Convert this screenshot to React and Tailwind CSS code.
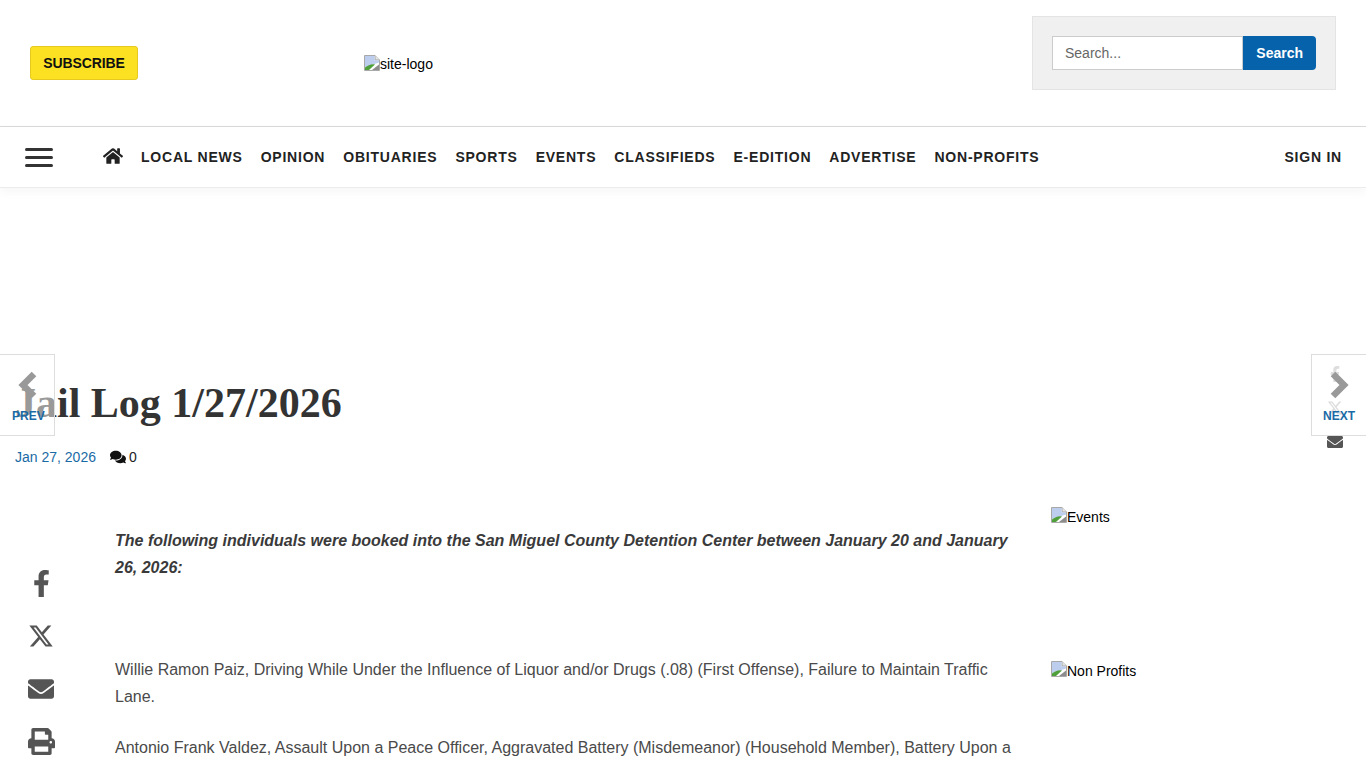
import { FaHome, FaComments, FaFacebookF, FaEnvelope, FaPrint } from 'react-icons/fa';
import { FaXTwitter } from 'react-icons/fa6';

const navLinks = ['LOCAL NEWS', 'OPINION', 'OBITUARIES', 'SPORTS', 'EVENTS', 'CLASSIFIEDS', 'E-EDITION', 'ADVERTISE', 'NON-PROFITS'];

function BrokenImage({ alt, textClass = 'pt-[2px]' }) {
  return (
    <span className="inline-flex items-start text-[14px] leading-[16px] text-black">
      <svg width="16" height="16" viewBox="0 0 16 16" className="shrink-0">
        <path d="M0.5 0.5H11L15.5 5V15.5H0.5Z" fill="#fff" stroke="#a8a8a8" />
        <path d="M11 0.5V5H15.5" fill="#e4e4e4" stroke="#a8a8a8" />
        <path d="M1 1H10.5V5.5H15V7.5L1 12Z" fill="#bccdee" />
        <path d="M1 15V12.5C4 10 8 8.5 11 9.5L5 15Z" fill="#4f9f3a" />
        <path d="M8 15L15 9.5V15Z" fill="#8c8c8c" />
      </svg>
      <span className={textClass}>{alt}</span>
    </span>
  );
}

function Chevron({ points }) {
  return (
    <svg width="22" height="30" viewBox="0 0 22 30" className="text-[#999]">
      <polyline points={points} fill="none" stroke="currentColor" strokeWidth="6.5" />
    </svg>
  );
}

function Header() {
  return (
    <header className="flex h-[127px] items-start border-b border-[#d9d9d9]">
      <a className="ml-[30px] mt-[46px] flex h-[34px] w-[108px] items-center justify-center rounded-[3px] border border-[#e6c91f] bg-[#fbe122] text-[14px] font-bold tracking-[-0.1px] text-[#111]">
        SUBSCRIBE
      </a>
      <div className="ml-[226px] mt-[54px]">
        <BrokenImage alt="site-logo" textClass="pt-[1px]" />
      </div>
      <div className="ml-auto mr-[30px] mt-4 flex h-[74px] w-[304px] items-center border border-[#e4e4e4] bg-[#f0f0f0] px-[19px]">
        <div className="flex h-[34px] w-[192px] items-center border border-[#ccc] bg-white pl-3 text-[14px] text-[#666]">
          Search...
        </div>
        <button className="flex h-[34px] w-[73px] items-center justify-center rounded-r-[4px] bg-[#0562ab] text-[14px] font-bold text-white">
          Search
        </button>
      </div>
    </header>
  );
}

function Nav() {
  return (
    <nav className="flex h-[61px] items-center border-b border-[#ececec] shadow-[0_4px_10px_rgba(0,0,0,0.04)]">
      <div className="ml-[25px] flex w-[28px] flex-col gap-[5px]">
        <span className="h-[3px] rounded-sm bg-[#333]" />
        <span className="h-[3px] rounded-sm bg-[#333]" />
        <span className="h-[3px] rounded-sm bg-[#333]" />
      </div>
      <FaHome className="ml-[50px] mb-[3px] text-[#222]" size={20} />
      <ul className="ml-[18px] flex gap-[18px] text-[14px] font-bold tracking-[0.78px] text-[#222]">
        {navLinks.map(link => (
          <li key={link}>{link}</li>
        ))}
      </ul>
      <a className="ml-auto mr-6 text-[14px] font-bold tracking-[0.78px] text-[#222]">SIGN IN</a>
    </nav>
  );
}

function ArticleBody() {
  return (
    <div className="mt-[40px] flex">
      <div className="ml-[115px] w-[900px] text-[16px] leading-[27px] text-[#4a4a4a]">
        <p className="mt-[20px] font-bold italic text-[#3a3a3a]">
          The following individuals were booked into the San Miguel County Detention Center between January 20 and January 26, 2026:
        </p>
        <p className="mt-[75px]">
          Willie Ramon Paiz, Driving While Under the Influence of Liquor and/or Drugs (.08) (First Offense), Failure to Maintain Traffic Lane.
        </p>
        <p className="mt-[24px]">
          Antonio Frank Valdez, Assault Upon a Peace Officer, Aggravated Battery (Misdemeanor) (Household Member), Battery Upon a Peace Officer.
        </p>
      </div>
      <aside className="ml-[36px] flex flex-col items-start gap-[136px]">
        <BrokenImage alt="Events" />
        <BrokenImage alt="Non Profits" />
      </aside>
    </div>
  );
}

export default function App() {
  return (
    <div className="relative h-[768px] w-[1366px] overflow-hidden bg-white font-['Liberation_Sans',Arial,sans-serif]">
      <Header />
      <Nav />
      <main className="pt-[175px]">
        <h1 className="ml-[15px] font-['Liberation_Serif','Times_New_Roman',serif] text-[42px] font-bold leading-[80px] text-[#333]">
          Jail Log 1/27/2026
        </h1>
        <div className="ml-[15px] mt-[4px] flex items-center text-[14px] leading-[20px]">
          <span className="text-[#1a6aa5]">Jan 27, 2026</span>
          <FaComments className="ml-[14px] text-[#111]" size={16} />
          <span className="ml-[3px] text-[#222]">0</span>
        </div>
        <ArticleBody />
      </main>

      {/* fixed share bar, left */}
      <div className="absolute left-[28px] top-[570px] flex w-[26px] flex-col items-center gap-[26px] text-[#555]">
        <FaFacebookF size={27} />
        <FaXTwitter size={26} />
        <FaEnvelope className="mt-[1px]" size={26} />
        <FaPrint size={27} />
      </div>

      {/* same share bar on the right, sits behind the next arrow */}
      <div className="absolute left-[1327px] top-[366px] flex w-4 flex-col items-center gap-[18px] text-[#555]">
        <FaFacebookF size={16} />
        <FaXTwitter size={16} />
        <FaEnvelope size={16} />
      </div>

      {/* post navigation */}
      <div className="absolute left-0 top-[354px] h-[82px] w-[55px] border border-l-0 border-[#ddd] bg-white/50">
        <div className="absolute left-[17px] top-[15px]">
          <Chevron points="17,4 6,15 17,26" />
        </div>
        <span className="absolute left-[12px] top-[52px] text-[12px] font-bold text-[#1a6aa5]">PREV</span>
      </div>
      <div className="absolute left-[1311px] top-[354px] h-[82px] w-[55px] border border-r-0 border-[#ddd] bg-white/80">
        <div className="absolute left-[16px] top-[15px]">
          <Chevron points="5,4 16,15 5,26" />
        </div>
        <span className="absolute left-[11px] top-[52px] text-[12px] font-bold text-[#1a6aa5]">NEXT</span>
      </div>
    </div>
  );
}
